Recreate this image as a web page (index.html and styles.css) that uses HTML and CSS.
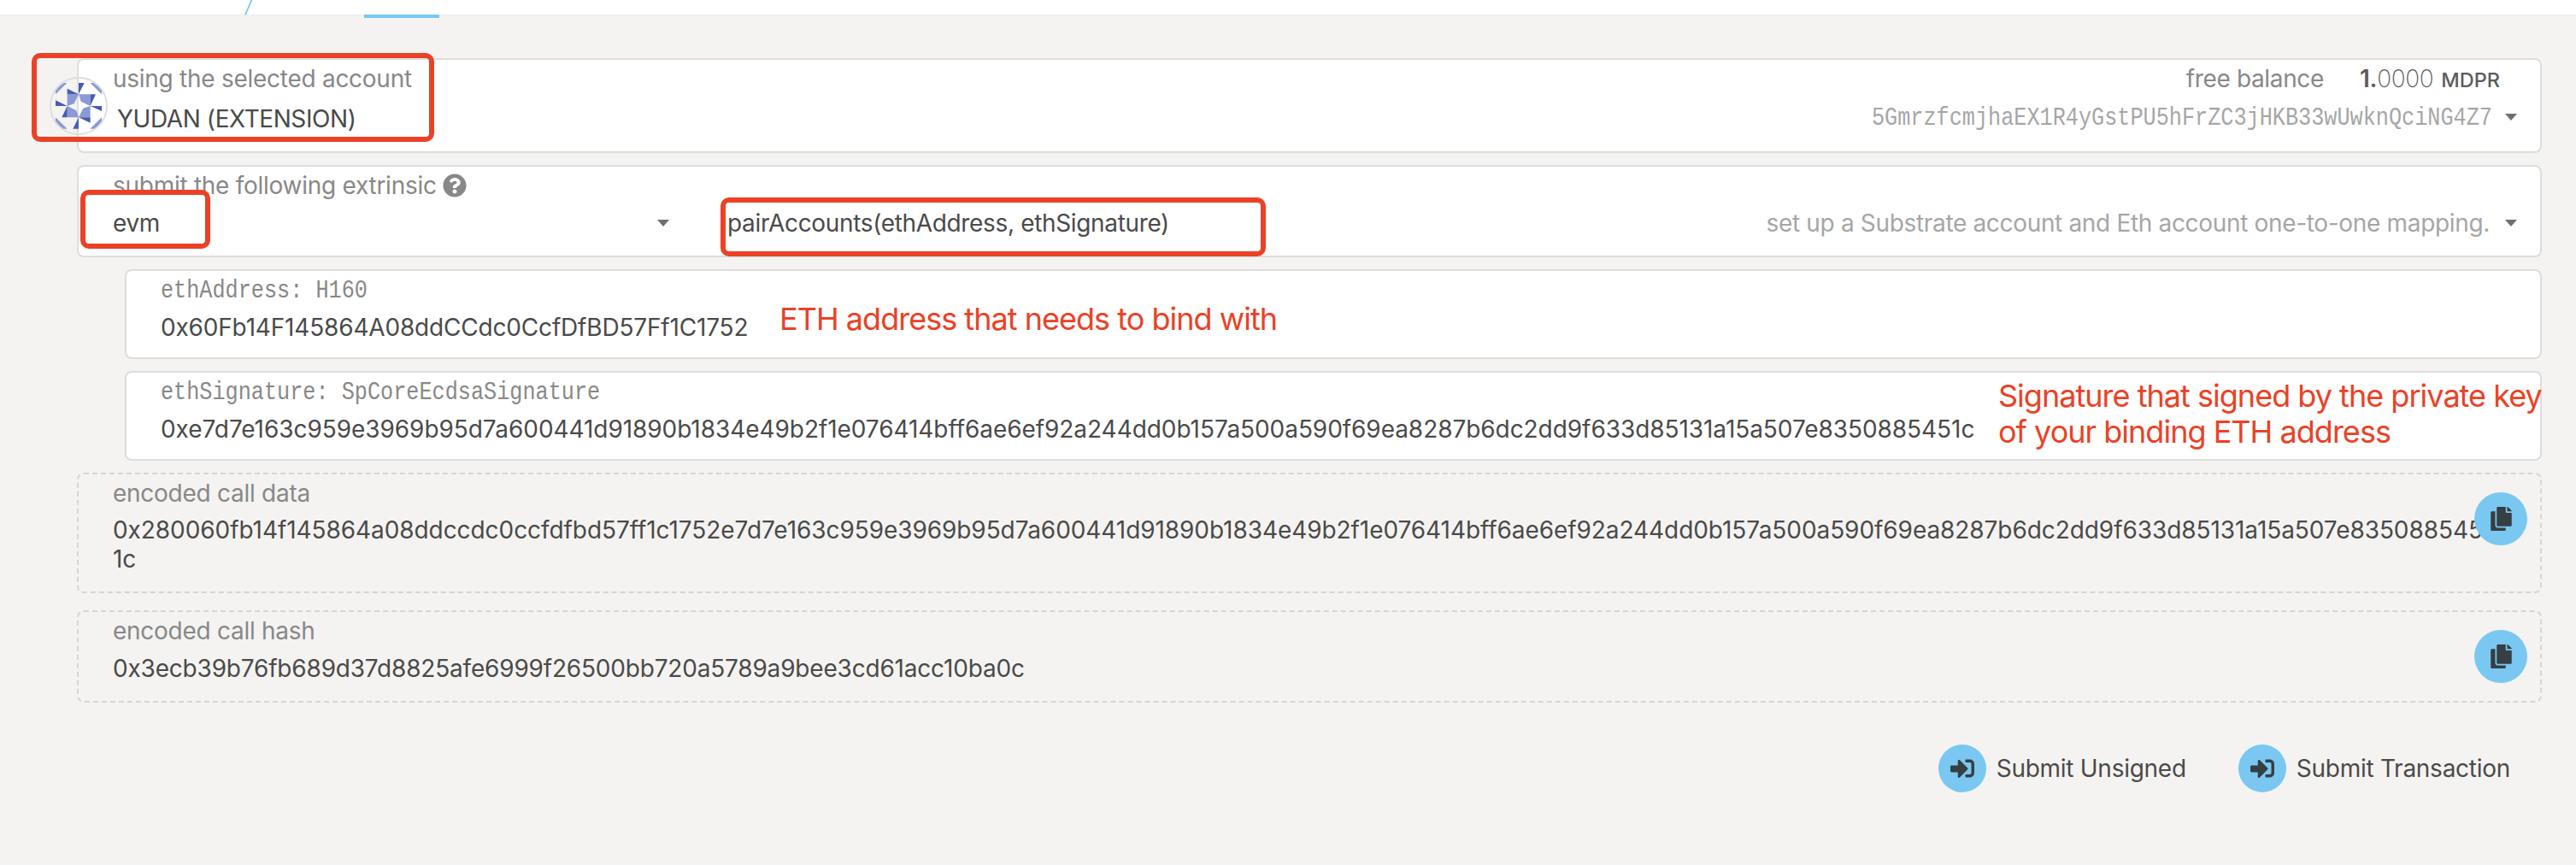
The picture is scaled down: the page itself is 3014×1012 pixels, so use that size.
FILE: index.html
```
<!DOCTYPE html>
<html lang="en">
<head>
<meta charset="utf-8">
<title>Extrinsics</title>
<link rel="stylesheet" href="styles.css">
</head>
<body>
<svg class="defs" width="0" height="0">
  <symbol id="copy" viewBox="0 0 448 512"><path d="M320 448v40c0 13.255-10.745 24-24 24H24c-13.255 0-24-10.745-24-24V120c0-13.255 10.745-24 24-24h72v296c0 30.879 25.121 56 56 56h168zm0-344V0H152c-13.255 0-24 10.745-24 24v368c0 13.255 10.745 24 24 24h272c13.255 0 24-10.745 24-24V128H344c-13.2 0-24-10.8-24-24zm120.971-31.029L375.029 7.029A24 24 0 0 0 358.059 0H352v96h96v-6.059a24 24 0 0 0-7.029-16.97z"/></symbol>
  <symbol id="sign-in" viewBox="0 0 512 512"><path d="M416 448h-84c-6.6 0-12-5.4-12-12v-40c0-6.6 5.4-12 12-12h84c17.7 0 32-14.3 32-32V160c0-17.7-14.3-32-32-32h-84c-6.6 0-12-5.4-12-12V76c0-6.6 5.4-12 12-12h84c53 0 96 43 96 96v192c0 53-43 96-96 96zm-47-201L201 79c-15-15-41-4.5-41 17v96H24c-13.3 0-24 10.7-24 24v96c0 13.3 10.7 24 24 24h136v96c0 21.5 26 32 41 17l168-168c9.3-9.4 9.3-24.6 0-34z"/></symbol>
  <symbol id="help" viewBox="0 0 512 512"><path d="M504 256c0 136.997-111.043 248-248 248S8 392.997 8 256C8 119.083 119.043 8 256 8s248 111.083 248 248zM262.655 90c-54.497 0-89.255 22.957-116.549 63.758-3.536 5.286-2.353 12.415 2.715 16.258l34.699 26.31c5.205 3.947 12.621 3.008 16.665-2.122 17.864-22.658 30.113-35.797 57.303-35.797 20.429 0 45.698 13.148 45.698 32.958 0 14.976-12.363 22.667-32.534 33.976C247.128 238.528 216 254.941 216 296v4c0 6.627 5.373 12 12 12h56c6.627 0 12-5.373 12-12v-1.333c0-28.462 83.186-29.647 83.186-106.667 0-58.002-60.165-102-116.531-102zM256 338c-25.365 0-46 20.635-46 46 0 25.364 20.635 46 46 46s46-20.636 46-46c0-25.364-20.635-46-46-46z"/></symbol>
</svg>

<header class="topbar">
  <svg class="slash" width="12" height="18" viewBox="0 0 12 18"><path d="M1 17.5 8.8 -1" fill="none" stroke="#79c7f0" stroke-width="1.8"/></svg>
  <span class="active-tab"></span>
</header>

<main class="content">
  <section class="card account">
    <svg class="identicon" viewBox="12 13 204 204">
      <g fill="#8a9ad4">
        <path d="M33 57V74L73 34H56zM172 34H155L195 74V57zM33 155V172L56 195H74zM195 155V172L172 195H154z"/>
        <path fill-rule="evenodd" d="M74 74H155V155H74zM114 74 122 99 155 115 130 123 114 155 106 131 74 115 98 107z"/>
      </g>
      <path fill="#455db3" d="M114 34h20l-20 40zM74 54l40 20H74zM155 74h19l-19 41zM155 115h40v18zM114 155h41v19zM114 155v40H94zM74 115v40H55zM33 95l41 20H33z"/>
      <circle cx="114" cy="115" r="99" fill="none" stroke="#dddddd" stroke-width="5.5"/>
    </svg>
    <div class="account-main">
      <div class="label">using the selected account</div>
      <div class="account-name">YUDAN (EXTENSION)</div>
    </div>
    <div class="account-side">
      <div class="balance"><span class="balance-label">free balance</span><b>1.</b><span class="decimals">0000</span><span class="unit">MDPR</span></div>
      <div class="address-row"><div class="address"><span>5GmrzfcmjhaEX1R4yGstPU5hFrZC3jHKB33wUwknQciNG4Z7</span></div><i class="caret"></i></div>
    </div>
    <div class="mark mark-account"></div>
  </section>

  <section class="card extrinsic">
    <div class="label with-help"><span>submit the following extrinsic</span><svg class="help" width="28" height="28"><use href="#help"/></svg></div>
    <div class="selects">
      <div class="module"><span class="evm">evm</span><i class="caret"></i></div>
      <div class="method"><span class="call">pairAccounts(ethAddress, ethSignature)</span><span class="docs">set up a Substrate account and Eth account one-to-one mapping.</span><i class="caret"></i></div>
    </div>
    <div class="mark mark-evm"></div>
    <div class="mark mark-call"></div>
  </section>

  <section class="card param">
    <div class="mono-label">ethAddress: H160</div>
    <div class="value value-address">0x60Fb14F145864A08ddCCdc0CcfDfBD57Ff1C1752</div>
    <div class="note note-address">ETH address that needs to bind with</div>
  </section>

  <section class="card param">
    <div class="mono-label">ethSignature: SpCoreEcdsaSignature</div>
    <div class="value value-signature">0xe7d7e163c959e3969b95d7a600441d91890b1834e49b2f1e076414bff6ae6ef92a244dd0b157a500a590f69ea8287b6dc2dd9f633d85131a15a507e8350885451c</div>
    <div class="note note-signature">Signature that signed by the private key<br>of your binding ETH address</div>
  </section>

  <section class="card output call-data">
    <div class="label">encoded call data</div>
    <div class="value value-data">0x280060fb14f145864a08ddccdc0ccfdfbd57ff1c1752e7d7e163c959e3969b95d7a600441d91890b1834e49b2f1e076414bff6ae6ef92a244dd0b157a500a590f69ea8287b6dc2dd9f633d85131a15a507e835088545<br>1c</div>
    <button class="copy"><svg width="25" height="28"><use href="#copy"/></svg></button>
  </section>

  <section class="card output call-hash">
    <div class="label">encoded call hash</div>
    <div class="value value-hash">0x3ecb39b76fb689d37d8825afe6999f26500bb720a5789a9bee3cd61acc10ba0c</div>
    <button class="copy"><svg width="25" height="28"><use href="#copy"/></svg></button>
  </section>

  <footer class="actions">
    <button class="action"><span class="disc"><svg width="28" height="28"><use href="#sign-in"/></svg></span>Submit Unsigned</button>
    <button class="action"><span class="disc"><svg width="28" height="28"><use href="#sign-in"/></svg></span>Submit Transaction</button>
  </footer>
</main>
</body>
</html>
```
FILE: styles.css
```
* { box-sizing: border-box; }

body {
  margin: 0;
  min-height: 1012px;
  background: #f4f3f1;
  color: #4a4a4a;
  font: 28px/34px Inter, "Noto Sans", sans-serif;
  letter-spacing: -0.27px;
}

.defs { position: absolute; }

button {
  padding: 0;
  border: 0;
  background: none;
  color: inherit;
  font: inherit;
  letter-spacing: inherit;
}

.topbar {
  display: flex;
  align-items: flex-start;
  height: 18px;
  padding-left: 286px;
  background: #fff;
  border-bottom: 1px solid #ececea;
}

.active-tab {
  width: 88px;
  height: 4px;
  margin: 17px 0 0 128px;
  background: #79c7f0;
}

.content {
  display: flex;
  flex-direction: column;
  gap: 14px;
  padding: 50px 40px 0 90px;
}

.card {
  position: relative;
  padding: 5px 40px 0 40px;
  border: 2px solid #dddddc;
  border-radius: 8px;
  background: #fff;
}

.label, .balance-label { color: #888; }

/* Account */
.account {
  display: flex;
  justify-content: space-between;
  height: 111px;
  padding-right: 27px;
}

.identicon {
  position: absolute;
  left: -34px;
  top: 20px;
  width: 68px;
  height: 68px;
}

.account-name {
  margin: 13px 0 0 5px;
  letter-spacing: -0.42px;
}

.account-side {
  display: flex;
  flex-direction: column;
  align-items: flex-end;
  gap: 9px;
}

.balance {
  display: flex;
  align-items: baseline;
  margin-right: 20px;
  color: #5c5c5c;
}

.balance-label { margin-right: 42px; letter-spacing: -0.35px; }
.balance b { font-weight: 600; }
.decimals { font-weight: 200; letter-spacing: -0.4px; }
.unit { margin-left: 9px; font-size: 23.5px; font-weight: 500; letter-spacing: 0; }

.address-row { display: flex; align-items: center; gap: 14px; }

.address {
  width: 727px;
  height: 34px;
}

.address span, .mono-label {
  display: block;
  font: 30px/36px "Liberation Mono", monospace;
  letter-spacing: 0;
  white-space: nowrap;
  transform: scaleX(0.84);
  transform-origin: left;
}

.address span { color: #a6a6a6; }

.caret {
  width: 14px;
  height: 8px;
  background: #6f6f6f;
  clip-path: polygon(0 0, 100% 0, 50% 100%);
}

/* Extrinsic */
.extrinsic { height: 108px; padding-right: 27px; }

.with-help {
  display: flex;
  align-items: center;
  gap: 7px;
}

.help { fill: #888; }

.selects { display: flex; margin-top: 10px; }

.module {
  display: flex;
  align-items: center;
  justify-content: space-between;
  width: 651px;
}

.evm { letter-spacing: -0.4px; }

.method {
  display: flex;
  flex: 1;
  align-items: center;
  margin-left: 68px;
}

.call { letter-spacing: -0.34px; }
.docs { margin: 0 18px 0 auto; color: #a6a6a6; letter-spacing: -0.33px; }

/* Parameters */
.param {
  height: 105px;
  margin-left: 56px;
}

.mono-label {
  height: 34px;
  color: #888;
}

.value { margin-top: 10px; white-space: nowrap; }
.value-address { letter-spacing: -0.18px; }
.value-signature { letter-spacing: -0.06px; }

/* Encoded output */
.output {
  border-style: dashed;
  border-color: #d5d5d3;
  background: none;
}

.call-data { height: 141px; margin-bottom: 6px; }
.value-data { letter-spacing: -0.07px; line-height: 33.6px; }
.call-hash { height: 108px; }
.value-hash { letter-spacing: -0.19px; }

.copy {
  position: absolute;
  right: 15px;
  top: 21px;
  display: flex;
  align-items: center;
  justify-content: center;
  width: 62px;
  height: 62px;
  border-radius: 50%;
  background: #7ac8f1;
  fill: #363f43;
}

/* Actions */
.actions {
  display: flex;
  justify-content: flex-end;
  gap: 61px;
  margin-top: 35px;
  padding-right: 37px;
}

.action { display: flex; align-items: center; gap: 12px; }

.disc {
  display: flex;
  align-items: center;
  justify-content: center;
  width: 56px;
  height: 56px;
  border-radius: 50%;
  background: #7ac8f1;
  fill: #363f43;
}

/* Red annotations drawn over the form */
.mark {
  position: absolute;
  border: 6px solid #eb4126;
  border-radius: 10px;
}

.mark-account { left: -55px; top: -8px; width: 471px; height: 104px; }
.mark-evm { left: 2px; top: 27px; width: 152px; height: 69px; }
.mark-call { left: 751px; top: 36px; width: 638px; height: 69px; }

.note {
  position: absolute;
  color: #eb4126;
  font-size: 36px;
  line-height: 42px;
  letter-spacing: -0.98px;
  white-space: nowrap;
}

.note-address { left: 764px; top: 35px; }
.note-signature { left: 2190px; top: 6px; }
```
